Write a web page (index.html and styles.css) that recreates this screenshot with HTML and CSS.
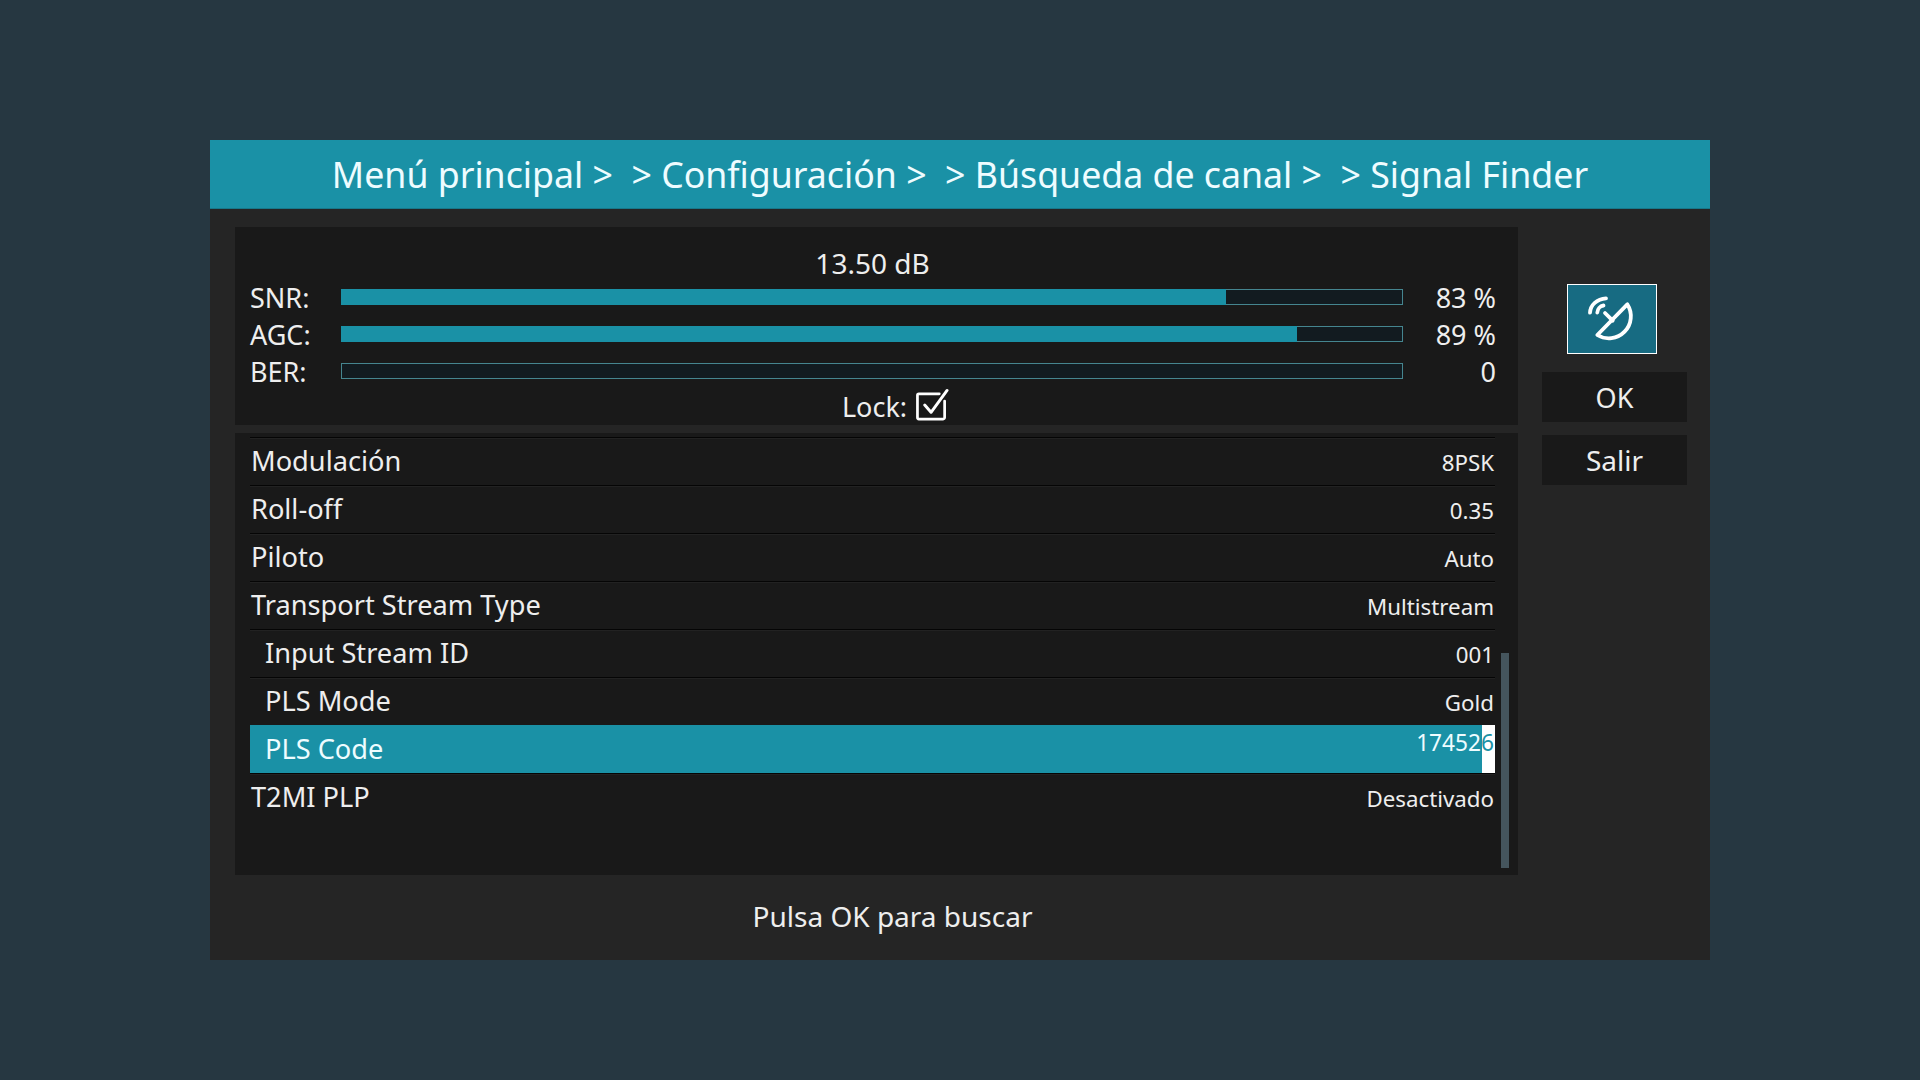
FILE: index.html
```html
<!DOCTYPE html>
<html lang="es">
<head>
    <meta charset="UTF-8">
    <title>Signal Finder</title>
    <link rel="stylesheet" href="styles.css">
</head>
<body>
    <div class="dialog">
        <div class="title">Menú principal &gt;&nbsp; &gt; Configuración &gt;&nbsp; &gt; Búsqueda de canal &gt;&nbsp; &gt; Signal Finder</div>
        <div class="content">
            <div class="main">
                <div class="panel signal">
                    <div class="db">13.50 dB</div>
                    <div class="meter">
                        <span class="meter-label">SNR:</span>
                        <div class="bar"><div class="bar-fill" style="width: 83.5%"></div></div>
                        <span class="meter-value">83 %</span>
                    </div>
                    <div class="meter">
                        <span class="meter-label">AGC:</span>
                        <div class="bar"><div class="bar-fill" style="width: 90.2%"></div></div>
                        <span class="meter-value">89 %</span>
                    </div>
                    <div class="meter">
                        <span class="meter-label">BER:</span>
                        <div class="bar"></div>
                        <span class="meter-value">0</span>
                    </div>
                    <div class="lock">
                        <span>Lock:</span>
                        <svg class="check" width="33" height="34" viewBox="0 0 34 34" fill="none" stroke="#fff" stroke-width="2.800" stroke-linecap="round" stroke-linejoin="round">
                            <path d="M24 5.500H3a1.500 1.500 0 0 0-1.500 1.500V30a1.500 1.500 0 0 0 1.500 1.500h25a1.500 1.500 0 0 0 1.500-1.500V13"/>
                            <path d="M9 17l6.500 7.500L32 2" stroke-width="3"/>
                        </svg>
                    </div>
                </div>
                <div class="panel settings">
                    <div class="list">
                        <div class="row"><span class="name">Modulación</span><span class="val">8PSK</span></div>
                        <div class="row"><span class="name">Roll-off</span><span class="val">0.35</span></div>
                        <div class="row"><span class="name">Piloto</span><span class="val">Auto</span></div>
                        <div class="row"><span class="name">Transport Stream Type</span><span class="val">Multistream</span></div>
                        <div class="row sub"><span class="name">Input Stream ID</span><span class="val">001</span></div>
                        <div class="row sub"><span class="name">PLS Mode</span><span class="val">Gold</span></div>
                        <div class="row sub active">
                            <span class="name">PLS Code</span>
                            <span class="val edit">17452<span class="cursor-digit">6</span></span>
                            <span class="cursor"></span>
                        </div>
                        <div class="row"><span class="name">T2MI PLP</span><span class="val">Desactivado</span></div>
                    </div>
                    <div class="scrollbar"></div>
                </div>
                <div class="hint">Pulsa OK para buscar</div>
            </div>
            <div class="side">
                <div class="dish-btn">
                    <svg width="88" height="68" viewBox="0 0 88 68" fill="none" stroke="#fff" stroke-width="3.800" stroke-linecap="round" stroke-linejoin="round">
                        <path d="M59.300 19.300 L29.300 50 A22 22 0 0 0 59.300 19.300Z"/>
                        <path d="M37 28 L44.700 35.700"/>
                        <path d="M22 27.700C22.300 20 29 13.800 38 13.300"/>
                        <path d="M29.300 27.500C29.500 24 32 21 35.500 20.500"/>
                    </svg>
                </div>
                <div class="btn">OK</div>
                <div class="btn btn-exit">Salir</div>
            </div>
        </div>
    </div>
</body>
</html>
```

FILE: styles.css
```css
* {
    margin: 0;
    padding: 0;
    box-sizing: border-box;
}

body {
    background-color: #263741;
    width: 1920px;
    height: 1080px;
    overflow: hidden;
    font-family: 'Noto Sans', 'Open Sans', sans-serif;
    color: #eeeeee;
    padding-top: 140px;
}

.dialog {
    width: 1500px;
    height: 820px;
    margin-left: 210px;
    background-color: #252525;
}

.title {
    height: 69px;
    line-height: 68px;
    background-color: #1a91a6;
    border-bottom: 1px solid #17788a;
    color: #eefcff;
    font-size: 35.7px;
    text-align: center;
}

.content {
    display: flex;
    padding: 18px 0 0 25px;
}

.main {
    width: 1283px;
}

.panel {
    background-color: #191919;
}

.signal {
    height: 198px;
    padding: 14px 23px 0 15px;
}

.db {
    height: 37px;
    line-height: 44px;
    font-size: 28px;
    text-align: center;
}

.meter {
    display: flex;
    align-items: center;
    height: 37px;
}

.meter-label {
    width: 91px;
    font-size: 27px;
    margin-top: 1px;
}

.bar {
    width: 1062px;
    height: 16px;
    border: 1px solid #45858f;
    background-color: #121b20;
}

.bar-fill {
    height: calc(100% + 2px);
    margin: -1px;
    background-color: #1a91a6;
}

.meter-value {
    flex: 1;
    font-size: 27px;
    text-align: right;
    margin: 1px -1px 0 0;
}

.lock {
    display: flex;
    align-items: center;
    justify-content: center;
    gap: 9px;
    font-size: 27px;
    height: 34px;
    margin-left: 46px;
}

.check {
    margin-top: -3px;
}

.settings {
    display: flex;
    height: 442px;
    margin-top: 8px;
    padding: 4px 0 0 15px;
}

.list {
    width: 1245px;
}

.row {
    position: relative;
    display: flex;
    align-items: center;
    justify-content: space-between;
    height: 48px;
    border-top: 1px solid #050505;
    box-shadow: inset 0 1px 0 #222222;
}

.name {
    font-size: 27.2px;
    margin-left: 1px;
    margin-top: -2px;
}

.val {
    font-size: 22.3px;
    margin-right: 1px;
    margin-top: 2px;
}

.sub .name {
    margin-left: 15px;
}

.active {
    background-color: #1a91a6;
    border-top-color: #1a91a6;
    box-shadow: none;
    color: #eefcff;
}

.edit {
    position: relative;
    z-index: 1;
    font-size: 22.7px;
    margin-top: -14px;
}

.cursor-digit {
    color: #1a91a6;
}

.cursor {
    position: absolute;
    right: 0;
    top: -1px;
    width: 13px;
    height: 48px;
    background-color: #ffffff;
}

.scrollbar {
    width: 8px;
    height: 215px;
    margin: 216px 0 0 6px;
    background-color: #45555d;
}

.hint {
    font-size: 28px;
    text-align: center;
    margin: 22px 0 0 32px;
    height: 38px;
    line-height: 38px;
}

.side {
    width: 192px;
    padding-left: 24px;
}

.dish-btn {
    width: 90px;
    height: 70px;
    margin: 57px 0 18px 25px;
    background-color: #176b82;
    border: 1px solid #ffffff;
}

.dish-btn svg {
    display: block;
}

.btn {
    width: 145px;
    height: 50px;
    margin-bottom: 13px;
    background-color: #191919;
    font-size: 27px;
    line-height: 51px;
    text-align: center;
}

.btn-exit {
    font-size: 28px;
    line-height: 50px;
}
```
